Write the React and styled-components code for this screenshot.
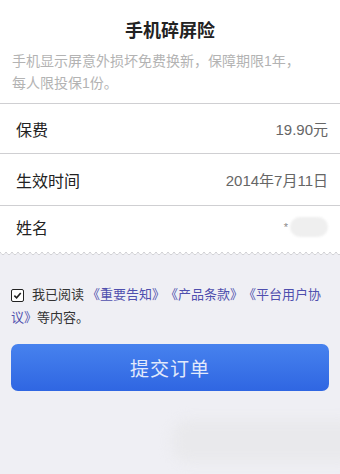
import React, { useState } from 'react';
import styled, { createGlobalStyle } from 'styled-components';

const GlobalStyle = createGlobalStyle`
  html, body {
    margin: 0;
    padding: 0;
    background: #efeff4;
    font-family: "Liberation Sans", "Noto Sans CJK SC", sans-serif;
  }
`;

const Page = styled.div`
  position: relative;
  width: 340px;
  height: 474px;
  background: #efeff4;
  overflow: hidden;
`;

const Card = styled.div`
  background: #fff;
  padding-bottom: 4px;
`;

const Header = styled.div`
  padding: 18px 12px 9px;
  border-bottom: 1px solid #cfcfd2;
`;

const Title = styled.h1`
  margin: 0 0 6px;
  text-align: center;
  font-size: 18px;
  font-weight: bold;
  color: #222;
  line-height: 26px;
`;

const Desc = styled.p`
  margin: 0;
  font-size: 14px;
  line-height: 22px;
  color: #b3b3b3;
`;

const Row = styled.div`
  display: flex;
  align-items: center;
  justify-content: space-between;
  height: ${(p) => p.h || 48}px;
  padding: 0 12px 0 16px;
  border-bottom: ${(p) => (p.last ? 'none' : '1px solid #cfcfd2')};
`;

const Label = styled.span`
  font-size: 16px;
  color: #222;
`;

const Value = styled.span`
  font-size: 15px;
  color: #666;
`;

const Masked = styled.span`
  display: flex;
  align-items: center;
  gap: 2px;
  color: #888;
  font-size: 11px;
`;

const Blur = styled.span`
  width: 38px;
  height: 20px;
  border-radius: 10px;
  background: #efefef;
  filter: blur(1px);
`;

const Scallop = styled.div`
  height: 4px;
  background: radial-gradient(circle at 3px 0, #fff 1.8px, #c9c9cc 2.4px, #efeff4 3px) repeat-x;
  background-size: 6px 4px;
`;

const Agree = styled.div`
  padding: 27px 12px 0 11px;
  font-size: 13px;
  line-height: 23px;
  color: #333;
  text-spacing-trim: space-all;
`;

const Box = styled.span`
  display: inline-flex;
  align-items: center;
  justify-content: center;
  width: 11px;
  height: 11px;
  border: 1.5px solid #222;
  border-radius: 2px;
  vertical-align: -1px;
  margin-right: 8px;
  background: #fff;
`;

const Link = styled.a`
  color: #4f4fae;
  text-decoration: none;
  margin-left: 3px;
`;

const Submit = styled.button`
  display: block;
  width: 318px;
  height: 47px;
  margin: 15px auto 0;
  border: none;
  border-radius: 7px;
  background: linear-gradient(#4782ee, #2f66e2);
  color: #e2eafb;
  font-size: 19px;
  font-family: "Liberation Sans", "Noto Sans CJK SC", sans-serif;
  letter-spacing: 1px;
`;

const Smudge = styled.div`
  position: absolute;
  left: 172px;
  top: 420px;
  width: 190px;
  height: 42px;
  border-radius: 16px;
  background: #e9e9ec;
  filter: blur(6px);
`;

export default function App() {
  const [checked] = useState(true);
  return (
    <Page>
      <GlobalStyle />
      <Card>
        <Header>
          <Title>手机碎屏险</Title>
          <Desc>
            手机显示屏意外损坏免费换新，保障期限1年，
            <br />
            每人限投保1份。
          </Desc>
        </Header>
        <Row h={49}>
          <Label>保费</Label>
          <Value>19.90元</Value>
        </Row>
        <Row h={51}>
          <Label>生效时间</Label>
          <Value>2014年7月11日</Value>
        </Row>
        <Row h={42} last>
          <Label>姓名</Label>
          <Masked>
            *<Blur />
          </Masked>
        </Row>
      </Card>
      <Scallop />
      <Agree lang="zh">
        <Box>
          {checked && (
            <svg width="9" height="9" viewBox="0 0 10 10">
              <path d="M1.5 5.2 L4 7.6 L8.6 2.2" fill="none" stroke="#222" strokeWidth="1.8" />
            </svg>
          )}
        </Box>
        我已阅读<Link>《重要告知》《产品条款》《平台用户协议》</Link>等内容。
      </Agree>
      <Submit>提交订单</Submit>
      <Smudge />
    </Page>
  );
}
